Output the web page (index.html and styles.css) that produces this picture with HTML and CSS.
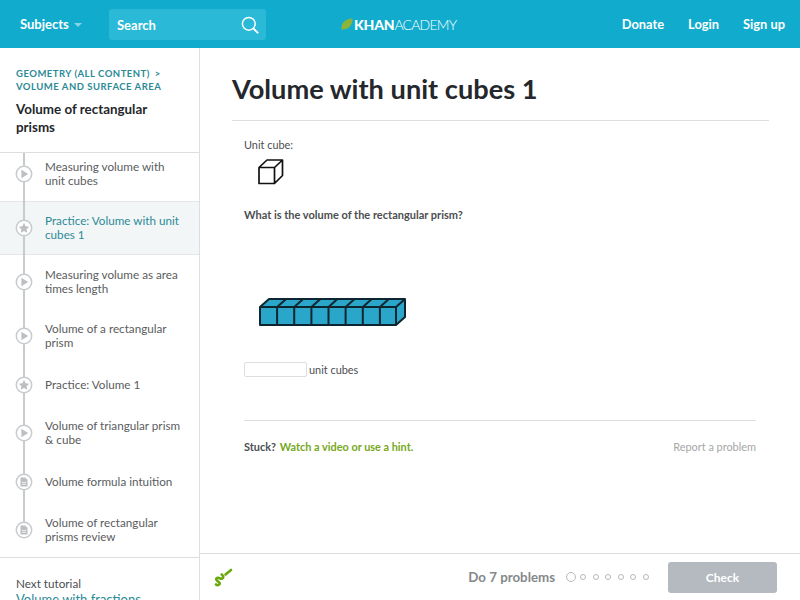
FILE: index.html
```html
<!DOCTYPE html>
<html lang="en">
<head>
    <meta charset="UTF-8">
    <title>Volume with unit cubes 1 | Khan Academy</title>
    <link rel="stylesheet" href="styles.css">
</head>
<body>
    <svg class="defs" width="0" height="0">
        <symbol id="i-play" viewBox="0 0 18 18">
            <circle cx="9" cy="9" r="7.7" fill="#fff" stroke="#c8cbce" stroke-width="1.5"/>
            <path d="M6.400 4.800l6.800 4.200-6.800 4.200z" fill="#bcc0c3"/>
        </symbol>
        <symbol id="i-star" viewBox="0 0 18 18">
            <circle cx="9" cy="9" r="7.7" fill="#fff" stroke="#c8cbce" stroke-width="1.5"/>
            <path d="M9 3.800l1.600 3.400 3.700.5-2.700 2.500.7 3.600-3.300-1.800-3.300 1.800.7-3.600-2.700-2.500 3.700-.5z" fill="#bcc0c3"/>
        </symbol>
        <symbol id="i-doc" viewBox="0 0 18 18">
            <circle cx="9" cy="9" r="7.7" fill="#fff" stroke="#c8cbce" stroke-width="1.5"/>
            <path d="M5.500 4.500h4.700l2.300 2.300v6.700h-7z" fill="#bcc0c3"/>
            <path d="M7 9.500h4M7 11.300h4" stroke="#fff" stroke-width=".7"/>
        </symbol>
    </svg>

    <header class="topbar">
        <a class="subjects">Subjects <span class="caret"></span></a>
        <div class="search">
            <span>Search</span>
            <svg width="18" height="18" viewBox="0 0 18 18" fill="none" stroke="#fff">
                <circle cx="7.800" cy="7.800" r="6.400" stroke-width="1.500"/>
                <path d="M12.600 12.600l4 4" stroke-width="2" stroke-linecap="round"/>
            </svg>
        </div>
        <div class="logo">
            <svg width="12" height="12" viewBox="0 0 12 12"><path d="M.5 11.500C0 5 4 .8 11.500.5 11.600 7 8 11.800.5 11.500z" fill="#8db33a"/></svg>
            <span class="logo-text"><b>KHAN</b>ACADEMY</span>
        </div>
        <nav class="topnav">
            <a>Donate</a>
            <a>Login</a>
            <a>Sign up</a>
        </nav>
    </header>

    <div class="layout">
        <aside class="sidebar">
            <div class="side-head">
                <div class="crumbs">Geometry (all content) <span class="crumb-sep">&gt;</span><br>Volume and surface area</div>
                <div class="side-title">Volume of rectangular prisms</div>
            </div>
            <ul class="lessons">
                <li class="lesson"><svg class="lesson-icon"><use href="#i-play"/></svg><span>Measuring volume with unit cubes</span></li>
                <li class="lesson active"><svg class="lesson-icon"><use href="#i-star"/></svg><span>Practice: Volume with unit cubes 1</span></li>
                <li class="lesson"><svg class="lesson-icon"><use href="#i-play"/></svg><span>Measuring volume as area times length</span></li>
                <li class="lesson"><svg class="lesson-icon"><use href="#i-play"/></svg><span>Volume of a rectangular prism</span></li>
                <li class="lesson"><svg class="lesson-icon"><use href="#i-star"/></svg><span>Practice: Volume 1</span></li>
                <li class="lesson"><svg class="lesson-icon"><use href="#i-play"/></svg><span>Volume of triangular prism &amp; cube</span></li>
                <li class="lesson"><svg class="lesson-icon"><use href="#i-doc"/></svg><span>Volume formula intuition</span></li>
                <li class="lesson"><svg class="lesson-icon"><use href="#i-doc"/></svg><span>Volume of rectangular prisms review</span></li>
            </ul>
            <div class="next">
                <div class="next-label">Next tutorial</div>
                <a class="next-link">Volume with fractions</a>
            </div>
        </aside>

        <main class="main">
            <div class="content">
                <h1>Volume with unit cubes 1</h1>
                <div class="exercise">
                    <p class="label">Unit cube:</p>
                    <svg class="unit-cube" width="26" height="27" viewBox="0 0 26 27" fill="none" stroke="#111" stroke-width="1.7" stroke-linejoin="round">
                        <path d="M1 8.500h15.500v16H1zM1 8.500L9 1h15.500v15.500l-8 8M16.500 8.500L24.500 1"/>
                    </svg>
                    <p class="question">What is the volume of the rectangular prism?</p>
                    <svg class="prism" width="148" height="30" viewBox="0 0 148 30" stroke="#0e2630" stroke-width="2" stroke-linejoin="round">
                        <path d="M1 10L10 2h136v18l-9 8H1z" fill="#2aa6ca"/>
                        <path d="M1 10h136v18M137 10l9-8M18.100 10v18M35.200 10v18M52.400 10v18M69.500 10v18M86.600 10v18M103.800 10v18M120.900 10v18M18.100 10l9-8M35.200 10l9-8M52.400 10l9-8M69.500 10l9-8M86.600 10l9-8M103.800 10l9-8M120.900 10l9-8" fill="none"/>
                    </svg>
                    <div class="answer">
                        <input class="answer-input" type="text">
                        <span>unit cubes</span>
                    </div>
                    <div class="stuck">
                        <span><b>Stuck?</b> <a class="hint">Watch a video or use a hint.</a></span>
                        <a class="report">Report a problem</a>
                    </div>
                </div>
            </div>
            <footer class="bottom">
                <svg class="scratch" width="22" height="20" viewBox="0 0 22 20" fill="none" stroke="#6aa90f" stroke-linecap="round" stroke-linejoin="round">
                    <path d="M4 17.500c2 1.800 4.500-.3 3.300-2-1-1.300-3.300-1.700-3.100-3.300.2-1.500 2.200-1.700 3.600-.9 1.500.8 3.600.2 3.500-1.400-.1-1-1-1.500-1.500-2.400" stroke-width="2.600"/>
                    <path d="M13.500 7.500L19 3" stroke-width="2.600"/>
                </svg>
                <div class="progress">
                    <span class="do-count">Do 7 problems</span>
                    <span class="dots">
                        <i class="dot first"></i><i class="dot"></i><i class="dot"></i><i class="dot"></i><i class="dot"></i><i class="dot"></i><i class="dot"></i>
                    </span>
                    <button class="check">Check</button>
                </div>
            </footer>
        </main>
    </div>
</body>
</html>
```

FILE: styles.css
```css
* {
    margin: 0;
    padding: 0;
    box-sizing: border-box;
}

html, body {
    height: 600px;
    overflow: hidden;
}

body {
    font-family: Lato, 'Liberation Sans', sans-serif;
    color: #4c4e50;
    background: white;
    display: flex;
    flex-direction: column;
}

.defs {
    display: none;
}

.topbar {
    flex: none;
    height: 48px;
    background: #11accd;
    color: white;
    display: flex;
    align-items: center;
    font-size: 13px;
    font-weight: 700;
    padding-left: 20px;
}

.subjects {
    width: 89px;
    display: flex;
    align-items: center;
    gap: 5px;
}

.caret {
    width: 0;
    height: 0;
    margin-top: 2px;
    border: 4px solid transparent;
    border-top: 4px solid #8ad3e6;
    border-bottom: 0;
}

.search {
    width: 157px;
    height: 31px;
    margin-top: 1px;
    background: #2ab9d7;
    border-radius: 3px;
    padding: 0 7px 0 8px;
    display: flex;
    align-items: center;
    justify-content: space-between;
}

.logo {
    margin-left: 75px;
    display: flex;
    align-items: center;
    gap: 1px;
}

.logo-text {
    font-size: 14px;
    font-weight: 300;
    letter-spacing: -0.8px;
}

.logo-text b {
    font-weight: 900;
    letter-spacing: -0.2px;
}

.topnav {
    margin-left: auto;
    display: flex;
    gap: 24px;
    padding-right: 15px;
    font-size: 12.850px;
}

.layout {
    flex: 1;
    min-height: 0;
    display: flex;
}

.sidebar {
    width: 200px;
    flex: none;
    border-right: 1px solid #dcdedf;
}

.side-head {
    height: 104px;
    padding: 19px 16px 0;
}

.crumbs {
    font-size: 9.500px;
    line-height: 13px;
    font-weight: 700;
    letter-spacing: 0.5px;
    text-transform: uppercase;
    color: #2c8a97;
}

.crumb-sep {
    margin-left: 2px;
}

.side-title {
    margin-top: 7px;
    font-size: 13.400px;
    line-height: 18px;
    font-weight: 700;
    color: #24272b;
}

.lessons {
    list-style: none;
    position: relative;
    overflow: hidden;
    border-top: 1px solid #dcdedf;
    border-bottom: 1px solid #dcdedf;
}

.lessons::before {
    content: "";
    position: absolute;
    left: 23px;
    top: 0;
    bottom: 27px;
    width: 2px;
    background: #c8cbce;
    z-index: 1;
}

.lesson {
    position: relative;
    min-height: 43px;
    padding: 12px 16px 14px 15px;
    display: flex;
    align-items: center;
    gap: 12px;
    font-size: 11.700px;
    line-height: 14px;
    color: #5a5c5e;
}

/* the list is scrolled a little in the shot */
.lesson:first-child {
    margin-top: -6px;
}

.lesson.active {
    background: #f3f6f6;
    box-shadow: inset 0 1px 0 #e4e6e7, inset 0 -1px 0 #e4e6e7;
    color: #2c8a97;
}

.lesson-icon {
    width: 18px;
    height: 18px;
    margin: -1px 0 -3px;
    flex: none;
    position: relative;
    z-index: 2;
}

.next {
    padding: 17px 16px 0;
    font-size: 11.700px;
    line-height: 16px;
}

.next-link {
    color: #2c8a97;
    font-size: 13px;
}

.main {
    flex: 1;
    min-width: 0;
    display: flex;
    flex-direction: column;
}

.content {
    flex: 1;
    padding: 0 31px 0 32px;
}

h1 {
    height: 73px;
    padding-top: 23px;
    font-size: 27.200px;
    line-height: 36px;
    font-weight: 700;
    color: #24272b;
    border-bottom: 1px solid #dcdedf;
}

.exercise {
    padding: 16px 13px 0 12px;
    font-size: 10.900px;
}

.label {
    line-height: 15px;
}

.unit-cube {
    display: block;
    margin: 7px 0 0 14px;
}

.question {
    margin-top: 21px;
    font-size: 11px;
    font-weight: 700;
    line-height: 15px;
}

.prism {
    display: block;
    margin: 75px 0 0 15px;
}

.answer {
    margin-top: 35px;
    display: flex;
    align-items: center;
    gap: 2px;
}

.answer-input {
    width: 63px;
    height: 15px;
    border: 1px solid #dcdedf;
    border-radius: 2px;
    background: white;
}

.stuck {
    margin-top: 43px;
    border-top: 1px solid #dcdedf;
    padding-top: 18px;
    display: flex;
    justify-content: space-between;
    line-height: 15px;
}

.hint {
    margin-left: 1px;
    font-weight: 700;
    color: #76a81c;
}

.report {
    color: #a4a7a9;
}

.bottom {
    flex: none;
    height: 47px;
    border-top: 1px solid #dcdedf;
    padding: 0 23px 0 12px;
    display: flex;
    align-items: center;
    justify-content: space-between;
}

.progress {
    display: flex;
    align-items: center;
}

.do-count {
    font-size: 13.300px;
    font-weight: 700;
    color: #85888b;
}

.dots {
    margin: 0 19px 0 11px;
    display: flex;
    align-items: center;
    gap: 6.600px;
}

.dot {
    width: 6px;
    height: 6px;
    border: 1.500px solid #b5b8bb;
    border-radius: 50%;
}

.dot.first {
    width: 10px;
    height: 10px;
    margin-right: -2.600px;
}

.check {
    width: 109px;
    height: 31px;
    border: none;
    border-radius: 3px;
    background: #b5b9c0;
    color: white;
    font-family: inherit;
    font-size: 12px;
    font-weight: 700;
}
```
